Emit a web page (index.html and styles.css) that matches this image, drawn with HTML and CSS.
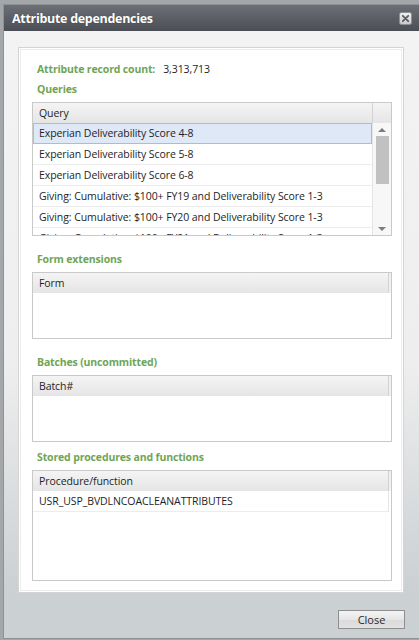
FILE: index.html
```html
<!DOCTYPE html>
<html>
<head>
<meta charset="utf-8">
<link rel="stylesheet" href="styles.css">
</head>
<body>
<div class="dialog">
  <div class="titlebar">
    <span class="title">Attribute dependencies</span>
    <span class="close-x">
      <svg width="13" height="13" viewBox="0 0 13 13">
        <defs>
          <linearGradient id="xg" x1="0" y1="0" x2="0" y2="1">
            <stop offset="0" stop-color="#f2f2f2"/>
            <stop offset="1" stop-color="#c9c9c9"/>
          </linearGradient>
        </defs>
        <rect x="0.5" y="0.5" width="12" height="12" rx="2" fill="url(#xg)" stroke="#8d9094"/>
        <path d="M3.8 3.8 L9.2 9.2 M9.2 3.8 L3.8 9.2" stroke="#5a5d62" stroke-width="1.8" stroke-linecap="round"/>
      </svg>
    </span>
  </div>
  <div class="body">
    <div class="panel">
      <div class="count-line">
        <span class="label">Attribute record count:</span>
        <span class="value">3,313,713</span>
      </div>
      <div class="label section first">Queries</div>
      <div class="grid grid-queries">
        <div class="grid-head">
          <div class="head-cell">Query</div>
          <div class="head-scroll"></div>
        </div>
        <div class="grid-main">
          <div class="rows">
            <div class="row selected">Experian Deliverability Score 4-8</div>
            <div class="row">Experian Deliverability Score 5-8</div>
            <div class="row">Experian Deliverability Score 6-8</div>
            <div class="row">Giving: Cumulative: $100+ FY19 and Deliverability Score 1-3</div>
            <div class="row">Giving: Cumulative: $100+ FY20 and Deliverability Score 1-3</div>
            <div class="row">Giving: Cumulative: $100+ FY21 and Deliverability Score 1-3</div>
          </div>
          <div class="scrollbar">
            <div class="arrow up"></div>
            <div class="track"><div class="thumb"></div></div>
            <div class="arrow down"></div>
          </div>
        </div>
      </div>
      <div class="label section">Form extensions</div>
      <div class="grid grid-small">
        <div class="grid-head">
          <div class="head-cell">Form</div>
          <div class="head-fill"></div>
        </div>
      </div>
      <div class="label section">Batches (uncommitted)</div>
      <div class="grid grid-small">
        <div class="grid-head">
          <div class="head-cell">Batch#</div>
          <div class="head-fill"></div>
        </div>
      </div>
      <div class="label section tight">Stored procedures and functions</div>
      <div class="grid grid-proc">
        <div class="grid-head">
          <div class="head-cell">Procedure/function</div>
          <div class="head-fill"></div>
        </div>
        <div class="row plain">USR_USP_BVDLNCOACLEANATTRIBUTES</div>
      </div>
    </div>
    <div class="footer">
      <button class="btn">Close</button>
    </div>
  </div>
</div>
</body>
</html>
```
FILE: styles.css
```css
html, body {
  margin: 0;
  padding: 0;
}
body {
  width: 419px;
  height: 640px;
  overflow: hidden;
  background: #a3a7aa;
  font-family: "Open Sans", "Noto Sans", sans-serif;
  font-size: 10.5px;
  letter-spacing: -0.08px;
  color: #1e1e1e;
}
.dialog {
  margin: 5px 0 0 4px;
  width: 415px;
  height: 633px;
  display: flex;
  flex-direction: column;
  box-shadow: 0 0 0 1px #8f9396;
}
.titlebar {
  height: 26px;
  flex: none;
  background: linear-gradient(#6c7076, #4b4f55);
  display: flex;
  align-items: center;
  justify-content: space-between;
  padding: 0 7px 0 8px;
}
.title {
  color: #fff;
  font-weight: bold;
  font-size: 12.5px;
  letter-spacing: -0.3px;
  text-shadow: 0 0 1px rgba(0,0,0,0.4);
}
.close-x {
  display: flex;
  margin-top: 1px;
}
.body {
  flex: 1;
  display: flex;
  flex-direction: column;
  background: linear-gradient(#f3f3f3 0%, #eeeeee 55%, #cbd0d3 92%, #cbd0d3 100%);
  padding: 16px 15px 0 14px;
}
.panel {
  height: 546px;
  box-sizing: border-box;
  background: #fff;
  border: 1px solid #d4d4d4;
  box-shadow: inset 0 0 0 1px #ffffff, inset 0 0 0 2px #ececec;
  padding: 14px 11px 0 13px;
}
.label {
  color: #6fa556;
  font-weight: bold;
  height: 14px;
  line-height: 14px;
  letter-spacing: -0.15px;
}
.count-line {
  display: flex;
  height: 14px;
  line-height: 14px;
  padding-left: 5px;
}
.count-line .value {
  margin-left: 8px;
  color: #1e1e1e;
}
.section {
  padding-left: 5px;
  margin: 16px 0 6px;
}
.section.first {
  margin-top: 6px;
}
.section.tight {
  margin-top: 8px;
}
.grid {
  box-sizing: border-box;
  border: 1px solid #c9c9c9;
  background: #fff;
  overflow: hidden;
}
.grid-queries { height: 134px; }
.grid-small { height: 67px; }
.grid-proc { height: 111px; }
.grid-head {
  display: flex;
  height: 20px;
  background: linear-gradient(#f4f4f4, #e5e5e5);
}
.head-cell {
  flex: 1;
  line-height: 20px;
  padding-left: 6px;
  border-right: 1px solid #d2d2d2;
}
.head-scroll {
  width: 18px;
  flex: none;
}
.head-fill {
  width: 2px;
  flex: none;
  background: #f0f0f0;
}
.grid-main {
  display: flex;
  height: 112px;
}
.rows {
  flex: 1;
  overflow: hidden;
  border-right: 1px solid #e4e4e4;
}
.row {
  height: 21px;
  line-height: 20px;
  box-sizing: border-box;
  padding-left: 6px;
  border-bottom: 1px solid #ececec;
  white-space: nowrap;
}
.row.selected {
  background: #dfe8f6;
  border: 1px solid #a3bde3;
  padding-left: 5px;
  line-height: 19px;
}
.row.plain {
  margin-right: 2px;
  border-right: 1px solid #e4e4e4;
}
.scrollbar {
  width: 18px;
  flex: none;
  display: flex;
  flex-direction: column;
  align-items: center;
  background: #f7f7f7;
}
.arrow {
  width: 0;
  height: 0;
  border-left: 4px solid transparent;
  border-right: 4px solid transparent;
}
.arrow.up {
  margin-top: 5px;
  border-bottom: 4px solid #7d7d7d;
}
.arrow.down {
  margin-bottom: 4px;
  border-top: 4px solid #7d7d7d;
}
.track {
  flex: 1;
  width: 100%;
  display: flex;
  justify-content: center;
  padding-top: 4px;
  box-sizing: border-box;
}
.thumb {
  width: 13px;
  height: 48px;
  background: #c1c1c1;
}
.footer {
  flex: 1;
  display: flex;
  justify-content: flex-end;
  align-items: flex-start;
  padding-top: 17px;
}
.btn {
  width: 67px;
  height: 19px;
  margin-right: -1px;
  box-sizing: border-box;
  border: 1px solid #8e8e8e;
  background: linear-gradient(#f4f4f4, #e6e6e6 50%, #dadada 51%, #e2e2e2);
  font-family: "Open Sans", "Noto Sans", sans-serif;
  font-size: 11px;
  color: #2a2a2a;
  padding: 0;
  line-height: 16px;
}
```
